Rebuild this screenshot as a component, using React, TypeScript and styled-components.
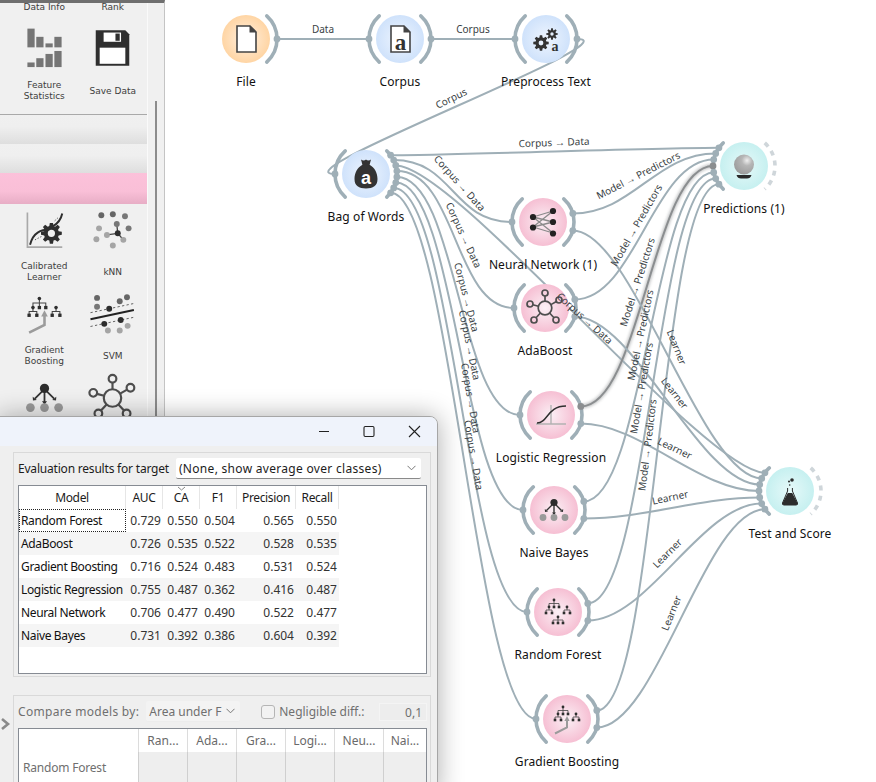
import React from "react";
import styled, { createGlobalStyle } from "styled-components";

const GlobalStyle = createGlobalStyle`
  html, body { margin: 0; padding: 0; background: #fff; }
  body { font-family: "Noto Sans", "Liberation Sans", sans-serif; }
`;

const Page = styled.div`
  position: relative;
  display: flex;
  width: 876px;
  height: 782px;
  overflow: hidden;
  background: #fff;
`;

/* ---------- left toolbox ---------- */
const Toolbox = styled.aside`
  display: flex;
  flex: 0 0 165px;
  box-sizing: border-box;
  height: 100%;
  border-right: 1px solid #c4c4c4;
  border-top: 3px solid #6f6f6f;
  background: #f0f0f0;
`;
const ToolColumn = styled.div`
  flex: 0 0 147px;
  display: flex;
  flex-direction: column;
  overflow: hidden;
  border-right: 1px solid #fafafa;
`;
const ScrollStrip = styled.div`
  flex: 1;
  display: flex;
  justify-content: center;
  padding-top: 98px;
`;
const ScrollThumb = styled.div`
  width: 2px;
  margin-right: 1px;
  background: #8c8c8c;
`;
const ToolGrid = styled.div<{ $top?: number }>`
  display: grid;
  grid-template-columns: 68.5px 68.5px;
  padding-left: 10px;
  margin-top: ${(p) => p.$top ?? 0}px;
  flex: none;
`;
const ToolCell = styled.div`
  height: 84px;
  box-sizing: border-box;
  padding-top: 6px;
  display: flex;
  flex-direction: column;
  align-items: center;
`;
const ToolIcon = styled.svg`
  width: 47px;
  height: 40px;
  overflow: visible;
  flex: none;
`;
const ToolLabel = styled.div`
  margin-top: 10px;
  height: 24px;
  display: flex;
  align-items: center;
  text-align: center;
  font-family: "DejaVu Sans", sans-serif;
  font-size: 9px;
  line-height: 11px;
  color: #3d3d3d;
  white-space: pre-line;
`;
const Separator = styled.div`
  flex: none;
  margin-top: 7px;
  height: 1px;
  background: #a9a9a9;
`;
const CategoryBar = styled.div<{ $pink?: boolean }>`
  flex: none;
  height: ${(p) => (p.$pink ? 31 : 29)}px;
  background: ${(p) =>
    p.$pink
      ? "linear-gradient(#fcc1da 0%, #f9bfd7 60%, #e7adc5 100%)"
      : "linear-gradient(#f0f0f0 0%, #efefef 40%, #dedede 100%)"};
`;

/* ---------- canvas ---------- */
const Canvas = styled.main`
  position: relative;
  flex: 1;
  height: 100%;
  background: #fff;
`;
const WireLayer = styled.svg`
  position: absolute;
  left: 0;
  top: 0;
  width: 711px;
  height: 782px;
`;
const WirePath = styled.path<{ $active?: boolean }>`
  fill: none;
  stroke: ${(p) => (p.$active ? "#8b8e90" : "#9fafb7")};
  stroke-width: 2;
`;
const WireGlow = styled.path`
  fill: none;
  stroke: #8b8e90;
  stroke-width: 4;
  opacity: 0.55;
  filter: blur(1.5px);
`;
const WireLabel = styled.text`
  font-family: "Noto Sans", sans-serif;
  font-size: 10px;
  fill: #3a3f45;
  text-anchor: middle;
  dominant-baseline: central;
`;
const ArrowGlyph = styled.tspan`
  font-family: "Liberation Sans", sans-serif;
`;
const NodeBox = styled.div`
  position: absolute;
  width: 160px;
  display: flex;
  flex-direction: column;
  align-items: center;
`;
const NodeArt = styled.svg`
  width: 80px;
  height: 80px;
  flex: none;
  overflow: visible;
`;
const NodeLabel = styled.div`
  margin-top: -5px;
  font-size: 12px;
  line-height: 16px;
  letter-spacing: 0.1px;
  color: #111;
  white-space: nowrap;
`;

/* ---------- dialog ---------- */
const Dialog = styled.section`
  position: absolute;
  left: -2px;
  top: 416px;
  width: 440px;
  height: 380px;
  box-sizing: border-box;
  border: 1px solid #a6a6a6;
  border-radius: 0 8px 0 0;
  background: #efefef;
  box-shadow: 0 0 26px rgba(0, 0, 0, 0.32);
  overflow: hidden;
  font-size: 12px;
  color: #1c1c1c;
`;
const TitleBar = styled.header`
  height: 29px;
  display: flex;
  justify-content: flex-end;
  align-items: center;
  background: #eff3fb;
`;
const WinButton = styled.svg`
  width: 46px;
  height: 29px;
  stroke: #222;
  stroke-width: 1.1;
  fill: none;
`;
const DialogBody = styled.div`
  padding: 6px 6px 0 14px;
  display: flex;
  flex-direction: column;
`;
const Group = styled.div<{ $muted?: boolean }>`
  border: 1px solid #d9d9d9;
  padding: 5px 3px 2px 4px;
  color: ${(p) => (p.$muted ? "#6f6f6f" : "#1c1c1c")};
`;
const SecondGroup = styled(Group)`
  margin-top: 18px;
`;
const GroupRow = styled.div`
  display: flex;
  align-items: center;
  height: 21px;
`;
const RowText = styled.span<{ $track: number }>`
  white-space: nowrap;
  letter-spacing: ${(p) => p.$track}px;
`;
const Combo = styled.div<{ $muted?: boolean; $w: number; $ml: number; $track?: number }>`
  display: flex;
  align-items: center;
  justify-content: space-between;
  box-sizing: border-box;
  width: ${(p) => p.$w}px;
  margin-left: ${(p) => p.$ml}px;
  height: 21px;
  padding: 0 5px 0 3px;
  background: ${(p) => (p.$muted ? "#f3f3f3" : "#fff")};
  border-bottom: 1px solid ${(p) => (p.$muted ? "#ececec" : "#8a8a8a")};
  border-radius: 2px;
  white-space: nowrap;
  letter-spacing: ${(p) => p.$track ?? 0}px;
`;
const Chevron = styled.svg`
  width: 9px;
  height: 6px;
  flex: none;
  stroke: #777;
  fill: none;
`;
const CheckBox = styled.span`
  width: 12px;
  height: 12px;
  margin-left: 21px;
  border: 1px solid #b5b5b5;
  border-radius: 3px;
  background: #f2f2f2;
`;
const CheckText = styled.span`
  margin-left: 4px;
  white-space: nowrap;
`;
const NumberBox = styled.div`
  margin-left: auto;
  box-sizing: border-box;
  width: 48px;
  height: 18px;
  padding-right: 4px;
  text-align: right;
  line-height: 17px;
  border: 1px solid #f4f4f4;
  background: #ededed;
`;
const TableFrame = styled.div<{ $h: number; $mt: number }>`
  box-sizing: border-box;
  margin-top: ${(p) => p.$mt}px;
  height: ${(p) => p.$h}px;
  border: 1px solid #868b93;
  background: #fff;
`;
const ScoreRow = styled.div<{ $alt?: boolean }>`
  display: grid;
  grid-template-columns: 107px 37px 37px 37px 59px 43px;
  width: 320px;
  height: 23px;
  line-height: 23px;
  background: ${(p) => (p.$alt ? "#f5f5f5" : "transparent")};
`;
const HeadCell = styled.div`
  position: relative;
  text-align: center;
  letter-spacing: -0.35px;
  border-right: 1px solid #e6e6e6;
`;
const SortMark = styled.svg`
  position: absolute;
  left: 14px;
  top: 0;
  width: 9px;
  height: 5px;
  stroke: #888;
  fill: none;
`;
const NameCell = styled.div<{ $focus?: boolean }>`
  padding-left: 2px;
  white-space: nowrap;
  letter-spacing: -0.35px;
  color: #111;
  box-sizing: border-box;
  outline: ${(p) => (p.$focus ? "1px dotted #222" : "none")};
  outline-offset: -1px;
`;
const NumCell = styled.div`
  padding-right: 2px;
  text-align: right;
  color: #333;
`;
const CompareHead = styled.div`
  display: grid;
  grid-template-columns: 119px repeat(5, 49px) 1fr;
  height: 23px;
  line-height: 23px;
`;
const CompareHeadCell = styled.div`
  text-align: center;
  border-left: 1px solid #dcdcdc;
  color: #6a6a6a;
`;
const CompareRow = styled.div`
  display: grid;
  grid-template-columns: 119px repeat(5, 49px) 1fr;
  height: 29px;
`;
const CompareName = styled.div`
  padding-left: 4px;
  line-height: 31px;
  letter-spacing: -0.2px;
  color: #6f6f6f;
`;
const CompareCell = styled.div`
  background: #eeeeee;
  border-left: 1px solid #cfcfcf;
  border-bottom: 1px solid #cfcfcf;
`;
const CollapseMark = styled.svg`
  position: absolute;
  left: 2px;
  top: 301px;
  width: 10px;
  height: 12px;
  fill: none;
  stroke: #8a8a8a;
  stroke-width: 2.6;
`;

/* ---------- icon drawings ---------- */
const gear = (cx: number, cy: number, ro: number, ri: number, n: number, hole: number) => {
  let d = "";
  const step = (Math.PI * 2) / n;
  for (let i = 0; i < n; i++) {
    const a = i * step - Math.PI / 2;
    const w = step * 0.24;
    const pts: [number, number][] = [
      [ri, a - w * 1.5],
      [ro, a - w * 0.8],
      [ro, a + w * 0.8],
      [ri, a + w * 1.5],
    ];
    pts.forEach(([r, t], j) => {
      d += `${i === 0 && j === 0 ? "M" : "L"}${(cx + r * Math.cos(t)).toFixed(2)} ${(cy + r * Math.sin(t)).toFixed(2)}`;
    });
  }
  d += `Z M${cx + hole} ${cy} A${hole} ${hole} 0 1 0 ${cx - hole} ${cy} A${hole} ${hole} 0 1 0 ${cx + hole} ${cy}Z`;
  return d;
};

const Sq = ({ x, y }: { x: number; y: number }) => <rect x={x - 1.3} y={y - 1.3} width={2.6} height={2.6} fill="#2e2e2e" />;
const Dot = ({ x, y, r = 1.4, c = "#2e2e2e" }: { x: number; y: number; r?: number; c?: string }) => (
  <circle cx={x} cy={y} r={r} fill={c} />
);

const MainTrees = () => (
  <g>
    <path
      d="M-4 -12 V-8.5 M-9 -5 V-8.5 H1 V-5 M-4 -8.5 V-5 M-12 1 V-2 H-6 V1 M-9 -5 V-2 M9 -5 V-2 M6 1 V-2 H12 V1"
      stroke="#444"
      strokeWidth={0.8}
      fill="none"
    />
    <Dot x={-4} y={-12} />
    <Dot x={-9} y={-5} />
    <Sq x={-4} y={-5} />
    <Sq x={1} y={-5} />
    <Sq x={-12} y={1} />
    <Sq x={-6} y={1} />
    <Dot x={9} y={-5} />
    <Sq x={6} y={1} />
    <Sq x={12} y={1} />
  </g>
);
const IconFile = () => (
  <g>
    <path d="M-9 -13 H4 L10 -7 V13 H-9 Z" fill="#fff" stroke="#444" strokeWidth={1.6} />
    <path d="M3.5 -13.5 L10.5 -6.5 H3.5 Z" fill="#444" />
  </g>
);
const IconCorpus = () => (
  <g>
    <path d="M-9 -13 H4 L10 -7 V13 H-9 Z" fill="#fff" stroke="#444" strokeWidth={1.6} />
    <path d="M3.5 -13.5 L10.5 -6.5 H3.5 Z" fill="#444" />
    <text x={0.5} y={11} textAnchor="middle" fontFamily="Liberation Serif, serif" fontWeight={700} fontSize={23} fill="#333">
      a
    </text>
  </g>
);
const IconPreprocess = () => (
  <g fill="#333">
    <path d={gear(-5, 4, 7.8, 5.6, 8, 2.4)} fillRule="evenodd" />
    <path d={gear(6, -5, 5.8, 4, 8, 1.7)} fillRule="evenodd" />
    <text x={9} y={12} textAnchor="middle" fontFamily="Liberation Serif, serif" fontWeight={700} fontSize={14}>
      a
    </text>
  </g>
);
const IconBag = () => (
  <g>
    <path
      d="M-5 -14.5 C-3 -13 -1 -13.5 0 -14.5 C1 -13.5 3 -13 5 -14.5 L3.6 -9.2 C8.5 -6.5 11.5 -1 11.5 5 C11.5 12 7 14.4 0 14.4 C-7 14.4 -11.5 12 -11.5 5 C-11.5 -1 -8.5 -6.5 -3.6 -9.2 Z"
      fill="#333"
    />
    <text x={0} y={9.5} textAnchor="middle" fontFamily="Liberation Sans, sans-serif" fontWeight={700} fontSize={18} fill="#fff">
      a
    </text>
  </g>
);
const IconNeural = () => (
  <g>
    <path d="M-10 -5 L10 -11 M-10 -5 L10 0 M-10 -5 L10 11 M-10 5 L10 -11 M-10 5 L10 0 M-10 5 L10 11" stroke="#8a8a8a" strokeWidth={1.3} />
    {[[-10, -5], [-10, 5.5], [10, -11], [10, 0], [10, 11.5]].map(([x, y]) => (
      <circle key={`${x}${y}`} cx={x} cy={y} r={3.1} fill="#222" />
    ))}
  </g>
);
const IconAda = () => (
  <g fill="none" stroke="#4e4e4e" strokeWidth={1.7}>
    <circle r={6.8} />
    {[[0, -15], [14, -8], [11, 12], [-11, 12], [-15, -4]].map(([x, y]) => {
      const len = Math.hypot(x, y);
      return (
        <g key={`${x}${y}`}>
          <line x1={(x / len) * 6.8} y1={(y / len) * 6.8} x2={(x / len) * (len - 3)} y2={(y / len) * (len - 3)} />
          <circle cx={x} cy={y} r={3} />
        </g>
      );
    })}
  </g>
);
const IconLogistic = () => (
  <g fill="none">
    <path d="M0 -10 V9 M-15 9 H15" stroke="#b2b2b2" strokeWidth={1.4} />
    <path d="M-14 8 C-3 8 -4 -9 15 -9" stroke="#2f2f2f" strokeWidth={1.5} />
  </g>
);
const IconBayes = () => (
  <g>
    <path d="M0 -7 V4 M0 -7 L-7.5 0.5 M0 -7 L7.5 0.5" stroke="#333" strokeWidth={1.4} />
    <path d="M-2 2.5 L0 5 L2 2.5 Z M-9.2 -1 L-9 2 L-6 1.6 Z M9.2 -1 L9 2 L6 1.6 Z" fill="#333" />
    <circle cx={0} cy={-7.5} r={3.6} fill="#2c2c2c" />
    {[-11, 0, 11].map((x) => (
      <circle key={x} cx={x} cy={7.5} r={3.4} fill="#9a9a9a" />
    ))}
  </g>
);
const IconForest = () => (
  <g>
    <MainTrees />
    <path d="M0 5 V8 M-5 11 V8 H5 V11 M0 8 V11" stroke="#444" strokeWidth={0.8} fill="none" />
    <Dot x={0} y={5} />
    <Sq x={-5} y={11} />
    <Sq x={0} y={11} />
    <Sq x={5} y={11} />
  </g>
);
const IconBoost = () => (
  <g>
    <MainTrees />
    <path d="M-12 14.5 L0 8.5 V1" fill="none" stroke="#9b9b9b" strokeWidth={2} />
    <path d="M-2.6 2 L0 -3 L2.6 2 Z" fill="#9b9b9b" />
  </g>
);
const IconBall = () => (
  <g>
    <defs>
      <radialGradient id="ballShade" cx="0.65" cy="0.3" r="0.75">
        <stop offset="0" stopColor="#efefef" />
        <stop offset="0.35" stopColor="#b6b6b6" />
        <stop offset="1" stopColor="#9a9a9a" />
      </radialGradient>
    </defs>
    <circle cy={-1.5} r={10} fill="url(#ballShade)" />
    <path d="M-7.5 9 H7.5 C7 11.5 5 12.5 3 12.5 H-3 C-5 12.5 -7 11.5 -7.5 9 Z" fill="#2a2a2a" />
  </g>
);
const IconFlask = () => (
  <g fill="#2c2c2c">
    <circle cx={2} cy={-11} r={1.8} />
    <circle cx={-1} cy={-9.5} r={1} />
    <circle cx={-0.3} cy={-6} r={0.8} />
    <path d="M-2.4 -3 V0 L-7.5 12 Q-8 14 -6 14 H6 Q8 14 7.5 12 L2.4 0 V-3" fill="none" stroke="#2c2c2c" strokeWidth={1} />
    <path d="M-2.2 2 H2.2 L7.5 12 Q8 14 6 14 H-6 Q-8 14 -7.5 12 Z" />
  </g>
);
const IconStats = () => (
  <g transform="scale(.2564) translate(-135 -147)" fill="#757575">
    <rect x={83} y={85} width={22} height={57} />
    <rect x={110} y={110} width={22} height={32} />
    <rect x={138} y={130} width={22} height={12} />
    <rect x={165} y={110} width={22} height={32} />
    <rect x={83} y={188} width={22} height={14} />
    <rect x={110} y={175} width={22} height={27} />
    <rect x={138} y={162} width={22} height={40} />
    <rect x={165} y={153} width={22} height={49} />
  </g>
);
const IconFloppy = () => (
  <g transform="scale(.2564) translate(-339 -147)">
    <path d="M288 90 H378 L390 102 V198 H288 Z" fill="#2f2f2f" />
    <rect x={312} y={97} width={53} height={28} fill="#fff" />
    <rect x={348} y={100} width={13} height={22} fill="#2f2f2f" />
    <rect x={300} y={143} width={78} height={49} fill="#fff" />
  </g>
);
const IconCalibrated = () => (
  <g transform="scale(.2564) translate(-134 -90)">
    <path d="M82 37 V142 H188" fill="none" stroke="#a9a9a9" strokeWidth={5} />
    <path d="M90 135 C100 95 125 90 150 88" fill="none" stroke="#2e2e2e" strokeWidth={6} />
    <path d="M160 78 C176 70 184 58 188 40" fill="none" stroke="#2e2e2e" strokeWidth={6} />
    <path d="M105 120 L128 108 M165 62 L178 50" stroke="#555" strokeWidth={3} strokeDasharray="4 5" />
    <path d={gear(155, 100, 32, 23, 8, 11)} fillRule="evenodd" fill="#2e2e2e" />
  </g>
);
const IconKnn = () => (
  <g transform="scale(.2564) translate(-339 -90)">
    <path d="M355 100 L352 72 M355 100 L322 105 M355 100 L372 120" stroke="#444" strokeWidth={4} />
    {[
      [305, 45, "#666"], [340, 42, "#666"], [377, 48, "#777"], [298, 85, "#a5a5a5"], [388, 85, "#777"],
      [290, 118, "#a5a5a5"], [340, 137, "#a5a5a5"], [352, 72, "#777"], [322, 105, "#a5a5a5"], [372, 120, "#a5a5a5"],
    ].map(([x, y, c]) => (
      <circle key={`${x}${y}`} cx={x as number} cy={y as number} r={9} fill={c as string} />
    ))}
    <circle cx={355} cy={100} r={9} fill="#2c2c2c" />
  </g>
);
const IconSvm = () => (
  <g transform="scale(.2564) translate(-340 -342)">
    <path d="M273 358 L405 330" stroke="#222" strokeWidth={6} />
    <path d="M273 338 L405 310 M273 380 L405 352" stroke="#444" strokeWidth={2.5} strokeDasharray="7 7" />
    {[
      [293, 293, "#666"], [293, 320, "#777"], [362, 303, "#666"], [384, 291, "#666"], [326, 392, "#a5a5a5"],
      [362, 392, "#a5a5a5"], [386, 378, "#a5a5a5"],
    ].map(([x, y, c]) => (
      <circle key={`${x}${y}`} cx={x as number} cy={y as number} r={9} fill={c as string} />
    ))}
    <circle cx={330} cy={326} r={9} fill="#2c2c2c" />
    <circle cx={315} cy={372} r={9} fill="#2c2c2c" />
    <circle cx={365} cy={360} r={9} fill="#2c2c2c" />
  </g>
);

/* ---------- scheme data ---------- */
type Tone = "orange" | "blue" | "pink" | "teal";
const toneStops: Record<Tone, [string, string]> = {
  orange: ["#fff0e0", "#ffd5a4"],
  blue: ["#eef5fe", "#cfe2fb"],
  pink: ["#fbf0f5", "#f6bfd3"],
  teal: ["#e6f9f9", "#c6f0f0"],
};
type NodeDef = { x: number; y: number; label: string; tone: Tone; icon: React.ReactNode };
const nodes: Record<string, NodeDef> = {
  file: { x: 246, y: 39, label: "File", tone: "orange", icon: <IconFile /> },
  corpus: { x: 400, y: 39, label: "Corpus", tone: "blue", icon: <IconCorpus /> },
  pre: { x: 546, y: 39, label: "Preprocess Text", tone: "blue", icon: <IconPreprocess /> },
  bow: { x: 366, y: 174, label: "Bag of Words", tone: "blue", icon: <IconBag /> },
  nn: { x: 543, y: 222, label: "Neural Network (1)", tone: "pink", icon: <IconNeural /> },
  ada: { x: 545, y: 308, label: "AdaBoost", tone: "pink", icon: <IconAda /> },
  lr: { x: 551, y: 415, label: "Logistic Regression", tone: "pink", icon: <IconLogistic /> },
  nb: { x: 554, y: 510, label: "Naive Bayes", tone: "pink", icon: <IconBayes /> },
  rf: { x: 558, y: 612, label: "Random Forest", tone: "pink", icon: <IconForest /> },
  gb: { x: 567, y: 719, label: "Gradient Boosting", tone: "pink", icon: <IconBoost /> },
  pred: { x: 744, y: 166, label: "Predictions (1)", tone: "teal", icon: <IconBall /> },
  ts: { x: 790, y: 491, label: "Test and Score", tone: "teal", icon: <IconFlask /> },
};
const learners = ["nn", "ada", "lr", "nb", "rf", "gb"];
const outs: Record<string, string[]> = {
  file: ["corpus"],
  corpus: ["pre"],
  pre: ["bow"],
  bow: ["pred", "nn", "ts", "ada", "lr", "nb", "rf", "gb"],
  ...Object.fromEntries(learners.map((l) => [l, ["pred", "ts"]])),
};
const sinkOrder = ["bow", ...learners];
const ins: Record<string, string[]> = {
  corpus: ["file"],
  pre: ["corpus"],
  bow: ["pre"],
  pred: sinkOrder,
  ts: sinkOrder,
  ...Object.fromEntries(learners.map((l) => [l, ["bow"]])),
};
const C2D = "Corpus → Data";
const M2P = "Model → Predictors";
const links: [string, string, string, number, number, number][] = [
  ["file", "corpus", "Data", 323, 29, 0],
  ["corpus", "pre", "Corpus", 473, 29, 0],
  ["pre", "bow", "Corpus", 451, 98, -26],
  ["bow", "pred", C2D, 554, 142, -2],
  ["bow", "ts", C2D, 585, 318, 42],
  ["bow", "nn", C2D, 460, 183, 48],
  ["bow", "ada", C2D, 464, 235, 65],
  ["bow", "lr", C2D, 467, 297, 75],
  ["bow", "nb", C2D, 470, 345, 78],
  ["bow", "rf", C2D, 471, 398, 80],
  ["bow", "gb", C2D, 474, 455, 80],
  ["nn", "pred", M2P, 638, 175, -27],
  ["ada", "pred", M2P, 636, 225, -60],
  ["lr", "pred", M2P, 637, 282, -72],
  ["nb", "pred", M2P, 640, 335, -78],
  ["rf", "pred", M2P, 641, 388, -80],
  ["gb", "pred", M2P, 647, 445, -83],
  ["nn", "ts", "Learner", 677, 347, 68],
  ["ada", "ts", "Learner", 675, 393, 52],
  ["lr", "ts", "Learner", 675, 448, 26],
  ["nb", "ts", "Learner", 670, 497, -12],
  ["rf", "ts", "Learner", 667, 553, -45],
  ["gb", "ts", "Learner", 671, 613, -68],
];

const R = 31;
const SPREAD = (48 * Math.PI) / 180;
const anchor = (side: 1 | -1, i: number, n: number): [number, number] => {
  const a = -SPREAD + (2 * SPREAD * (i + 1)) / (n + 1);
  return [side * R * Math.cos(a), R * Math.sin(a)];
};
const arcD = (side: 1 | -1) => {
  const x = side * R * Math.cos(SPREAD);
  const y = R * Math.sin(SPREAD);
  return `M${x} ${-y} A${R} ${R} 0 0 ${side === 1 ? 1 : 0} ${x} ${y}`;
};
const wireD = (s: string, t: string) => {
  const a = anchor(1, outs[s].indexOf(t), outs[s].length);
  const b = anchor(-1, ins[t].indexOf(s), ins[t].length);
  const x1 = nodes[s].x + a[0] - 165;
  const y1 = nodes[s].y + a[1];
  const x2 = nodes[t].x + b[0] - 165;
  const y2 = nodes[t].y + b[1];
  const off = Math.min(Math.hypot(x2 - x1, y2 - y1) / 2, 60);
  return `M${x1} ${y1} C${x1 + off} ${y1} ${x2 - off} ${y2} ${x2} ${y2}`;
};

const SchemeNode = ({ id, def }: { id: string; def: NodeDef }) => {
  const [c0, c1] = toneStops[def.tone];
  const out = outs[id];
  const inp = ins[id];
  return (
    <NodeBox style={{ left: def.x - 165 - 80, top: def.y - 40 }}>
      <NodeArt viewBox="-40 -40 80 80">
        <defs>
          <radialGradient id={`tone-${id}`}>
            <stop offset="0" stopColor={c0} />
            <stop offset="1" stopColor={c1} />
          </radialGradient>
        </defs>
        {inp && <path d={arcD(-1)} fill="none" stroke="#9fafb7" strokeWidth={3.6} strokeLinecap="round" />}
        {out ? (
          <path d={arcD(1)} fill="none" stroke="#9fafb7" strokeWidth={3.6} strokeLinecap="round" />
        ) : (
          <path d={arcD(1)} fill="none" stroke="#cfd6da" strokeWidth={3.6} strokeDasharray="5 5.2" strokeLinecap="butt" />
        )}
        {inp?.map((src, i) => {
          const [x, y] = anchor(-1, i, inp.length);
          return <circle key={src} cx={x} cy={y} r={3.4} fill={id === "pred" && src === "lr" ? "#8b8e90" : "#9fafb7"} />;
        })}
        {out?.map((dst, i) => {
          const [x, y] = anchor(1, i, out.length);
          return <circle key={dst} cx={x} cy={y} r={3.4} fill={id === "lr" && dst === "pred" ? "#8b8e90" : "#9fafb7"} />;
        })}
        <circle r={24} fill={`url(#tone-${id})`} />
        {def.icon}
      </NodeArt>
      <NodeLabel>{def.label}</NodeLabel>
    </NodeBox>
  );
};

const tools: { label: string; icon: React.ReactNode }[] = [
  { label: "Calibrated\nLearner", icon: <IconCalibrated /> },
  { label: "kNN", icon: <IconKnn /> },
  { label: "Gradient\nBoosting", icon: <IconBoost /> },
  { label: "SVM", icon: <IconSvm /> },
  { label: "Naive Bayes", icon: <IconBayes /> },
  { label: "AdaBoost", icon: <IconAda /> },
];

const Tool = ({ label, icon }: { label: string; icon?: React.ReactNode }) => (
  <ToolCell>
    <ToolIcon viewBox="-18.33 -15.6 36.66 31.2">{icon}</ToolIcon>
    <ToolLabel>{label}</ToolLabel>
  </ToolCell>
);

const scores: [string, string, string, string, string, string][] = [
  ["Random Forest", "0.729", "0.550", "0.504", "0.565", "0.550"],
  ["AdaBoost", "0.726", "0.535", "0.522", "0.528", "0.535"],
  ["Gradient Boosting", "0.716", "0.524", "0.483", "0.531", "0.524"],
  ["Logistic Regression", "0.755", "0.487", "0.362", "0.416", "0.487"],
  ["Neural Network", "0.706", "0.477", "0.490", "0.522", "0.477"],
  ["Naive Bayes", "0.731", "0.392", "0.386", "0.604", "0.392"],
];
const headers = ["Model", "AUC", "CA", "F1", "Precision", "Recall"];
const compareHeads = ["Ran...", "Ada...", "Gra...", "Logi...", "Neu...", "Nai..."];

const ChevronDown = () => (
  <Chevron viewBox="0 0 9 6">
    <path d="M0.5 0.8 L4.5 4.8 L8.5 0.8" />
  </Chevron>
);

const labelParts = (text: string) => {
  const [a, b] = text.split("→");
  if (b === undefined) return text;
  return (
    <>
      {a}
      <ArrowGlyph>→</ArrowGlyph>
      {b}
    </>
  );
};

export default function App() {
  return (
    <Page>
      <GlobalStyle />
      <Toolbox>
        <ToolColumn>
          <ToolGrid $top={-64}>
            <Tool label="Data Info" />
            <Tool label="Rank" />
            <Tool label={"Feature\nStatistics"} icon={<IconStats />} />
            <Tool label="Save Data" icon={<IconFloppy />} />
          </ToolGrid>
          <Separator />
          <CategoryBar />
          <CategoryBar />
          <CategoryBar $pink />
          <ToolGrid>
            {tools.map((t) => (
              <Tool key={t.label} label={t.label} icon={t.icon} />
            ))}
          </ToolGrid>
        </ToolColumn>
        <ScrollStrip>
          <ScrollThumb />
        </ScrollStrip>
      </Toolbox>

      <Canvas>
        <WireLayer viewBox="0 0 711 782">
          {links.map(([s, t]) =>
            s === "lr" && t === "pred" ? <WireGlow key="glow" d={wireD(s, t)} /> : null
          )}
          {links.map(([s, t]) => (
            <WirePath key={`${s}-${t}`} d={wireD(s, t)} $active={s === "lr" && t === "pred"} />
          ))}
        </WireLayer>
        {Object.entries(nodes).map(([id, def]) => (
          <SchemeNode key={id} id={id} def={def} />
        ))}
        <WireLayer viewBox="0 0 711 782">
          {links.map(([s, t, text, x, y, r]) => (
            <WireLabel key={`${s}-${t}`} transform={`translate(${x - 165} ${y}) rotate(${r})`}>
              {labelParts(text)}
            </WireLabel>
          ))}
        </WireLayer>
      </Canvas>

      <Dialog>
        <TitleBar>
          <WinButton viewBox="0 0 46 29">
            <path d="M20 14.5 H30" />
          </WinButton>
          <WinButton viewBox="0 0 46 29">
            <rect x={19} y={9.5} width={10} height={10} rx={1.2} />
          </WinButton>
          <WinButton viewBox="0 0 46 29">
            <path d="M18 9 L29 20 M29 9 L18 20" />
          </WinButton>
        </TitleBar>
        <CollapseMark viewBox="0 0 10 12">
          <path d="M1 1 L7 6 L1 11" />
        </CollapseMark>
        <DialogBody>
          <Group>
            <GroupRow>
              <RowText $track={-0.2}>Evaluation results for target</RowText>
              <Combo $w={245} $ml={7} $track={0.3}>
                <span>(None, show average over classes)</span>
                <ChevronDown />
              </Combo>
            </GroupRow>
            <TableFrame $h={189} $mt={6}>
              <ScoreRow>
                {headers.map((h) => (
                  <HeadCell key={h}>
                    {h === "CA" && (
                      <SortMark viewBox="0 0 9 5">
                        <path d="M1 1 L4.5 4 L8 1" />
                      </SortMark>
                    )}
                    {h}
                  </HeadCell>
                ))}
              </ScoreRow>
              {scores.map(([name, ...vals], i) => (
                <ScoreRow key={name} $alt={i % 2 === 1}>
                  <NameCell $focus={i === 0}>{name}</NameCell>
                  {vals.map((v, j) => (
                    <NumCell key={j}>{v}</NumCell>
                  ))}
                </ScoreRow>
              ))}
            </TableFrame>
          </Group>
          <SecondGroup $muted>
            <GroupRow>
              <RowText $track={0.3}>Compare models by:</RowText>
              <Combo $muted $w={94} $ml={7}>
                <span>Area under F</span>
                <ChevronDown />
              </Combo>
              <CheckBox />
              <CheckText>Negligible diff.:</CheckText>
              <NumberBox>0,1</NumberBox>
            </GroupRow>
            <TableFrame $h={60} $mt={6}>
              <CompareHead>
                <span />
                {compareHeads.map((h) => (
                  <CompareHeadCell key={h}>{h}</CompareHeadCell>
                ))}
              </CompareHead>
              <CompareRow>
                <CompareName>Random Forest</CompareName>
                {compareHeads.map((h) => (
                  <CompareCell key={h} />
                ))}
              </CompareRow>
            </TableFrame>
          </SecondGroup>
        </DialogBody>
      </Dialog>
    </Page>
  );
}
